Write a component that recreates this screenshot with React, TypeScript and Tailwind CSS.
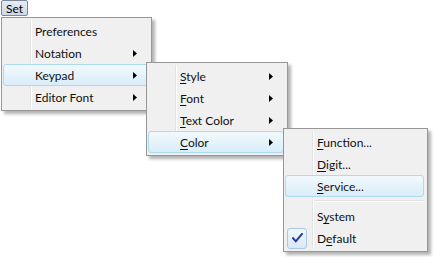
import React from "react";

type Item =
  | { kind: "sep" }
  | {
      kind?: "item";
      label: React.ReactNode;
      sub?: boolean;
      hot?: boolean;
      checked?: boolean;
    };

function Arrow() {
  return (
    <svg width="4" height="7" viewBox="0 0 4 7" className="ml-auto mr-[10px] shrink-0">
      <path d="M0 0 L4 3.5 L0 7 Z" fill="#000" />
    </svg>
  );
}

function Check() {
  return (
    <div className="flex h-[21px] w-[20px] items-center justify-center rounded-[3px] border border-[#a9cbe2] bg-gradient-to-b from-[#eef5fb] to-[#dbe9f6]">
      <svg width="11" height="10" viewBox="0 0 11 10">
        <path d="M1 5.2 L3.8 8.3 L10 1" fill="none" stroke="#1b3a9a" strokeWidth="2" strokeLinecap="square" />
      </svg>
    </div>
  );
}

function Menu({ items, className }: { items: Item[]; className: string }) {
  return (
    <div
      className={`absolute border border-[#979797] bg-[#f0f0f0] pb-[2px] pl-[1px] pr-[3px] pt-[2px] shadow-[3px_3px_3px_rgba(0,0,0,0.3)] ${className}`}
    >
      <div className="pointer-events-none absolute inset-y-[2px] left-[28px] w-[2px] border-l border-r border-l-[#e2e3e3] border-r-white" />
      <div className="relative flex flex-col">
        {items.map((it, i) =>
          it.kind === "sep" ? (
            <div key={i} className="flex h-[8px] items-center pl-[29px]">
              <div className="h-[2px] w-full border-b border-t border-b-white border-t-[#e0e0e0]" />
            </div>
          ) : (
            <div
              key={i}
              className={`flex h-[22px] items-center rounded-[3px] border ${
                it.hot
                  ? "border-[#aedaee] bg-gradient-to-b from-[#f2f9fd] to-[#d9edf8]"
                  : "border-transparent"
              }`}
            >
              <div className="flex w-[31px] shrink-0 items-center pl-[1px]">
                {it.checked && <Check />}
              </div>
              <span className="pt-[2px] leading-none text-[#111]">{it.label}</span>
              {it.sub && <Arrow />}
            </div>
          )
        )}
      </div>
    </div>
  );
}

const U = ({ children }: { children: React.ReactNode }) => (
  <span className="underline decoration-1 underline-offset-[2px]">{children}</span>
);

export default function App() {
  return (
    <div className="relative h-[257px] w-[434px] overflow-hidden bg-white font-['Lato','Noto_Sans',sans-serif] text-[12px]">
      <div className="ml-[1px] flex h-[16px] w-[27px] items-center justify-center rounded-[2px] border border-[#7c8899] bg-gradient-to-b from-[#e6ecf3] to-[#cfd8e4] pt-[1px] leading-none text-black">
        Set
      </div>
      <Menu
        className="left-[1px] top-[17px] w-[151px]"
        items={[
          { label: "Preferences" },
          { label: "Notation", sub: true },
          { label: "Keypad", sub: true, hot: true },
          { label: "Editor Font", sub: true },
        ]}
      />
      <Menu
        className="left-[146px] top-[62px] w-[142px]"
        items={[
          { label: <><U>S</U>tyle</>, sub: true },
          { label: <><U>F</U>ont</>, sub: true },
          { label: <><U>T</U>ext Color</>, sub: true },
          { label: <><U>C</U>olor</>, sub: true, hot: true },
        ]}
      />
      <Menu
        className="left-[283px] top-[128px] w-[145px]"
        items={[
          { label: <><U>F</U>unction...</> },
          { label: <><U>D</U>igit...</> },
          { label: <><U>S</U>ervice...</>, hot: true },
          { kind: "sep" },
          { label: <>S<U>y</U>stem</> },
          { label: <>D<U>e</U>fault</>, checked: true },
        ]}
      />
    </div>
  );
}
